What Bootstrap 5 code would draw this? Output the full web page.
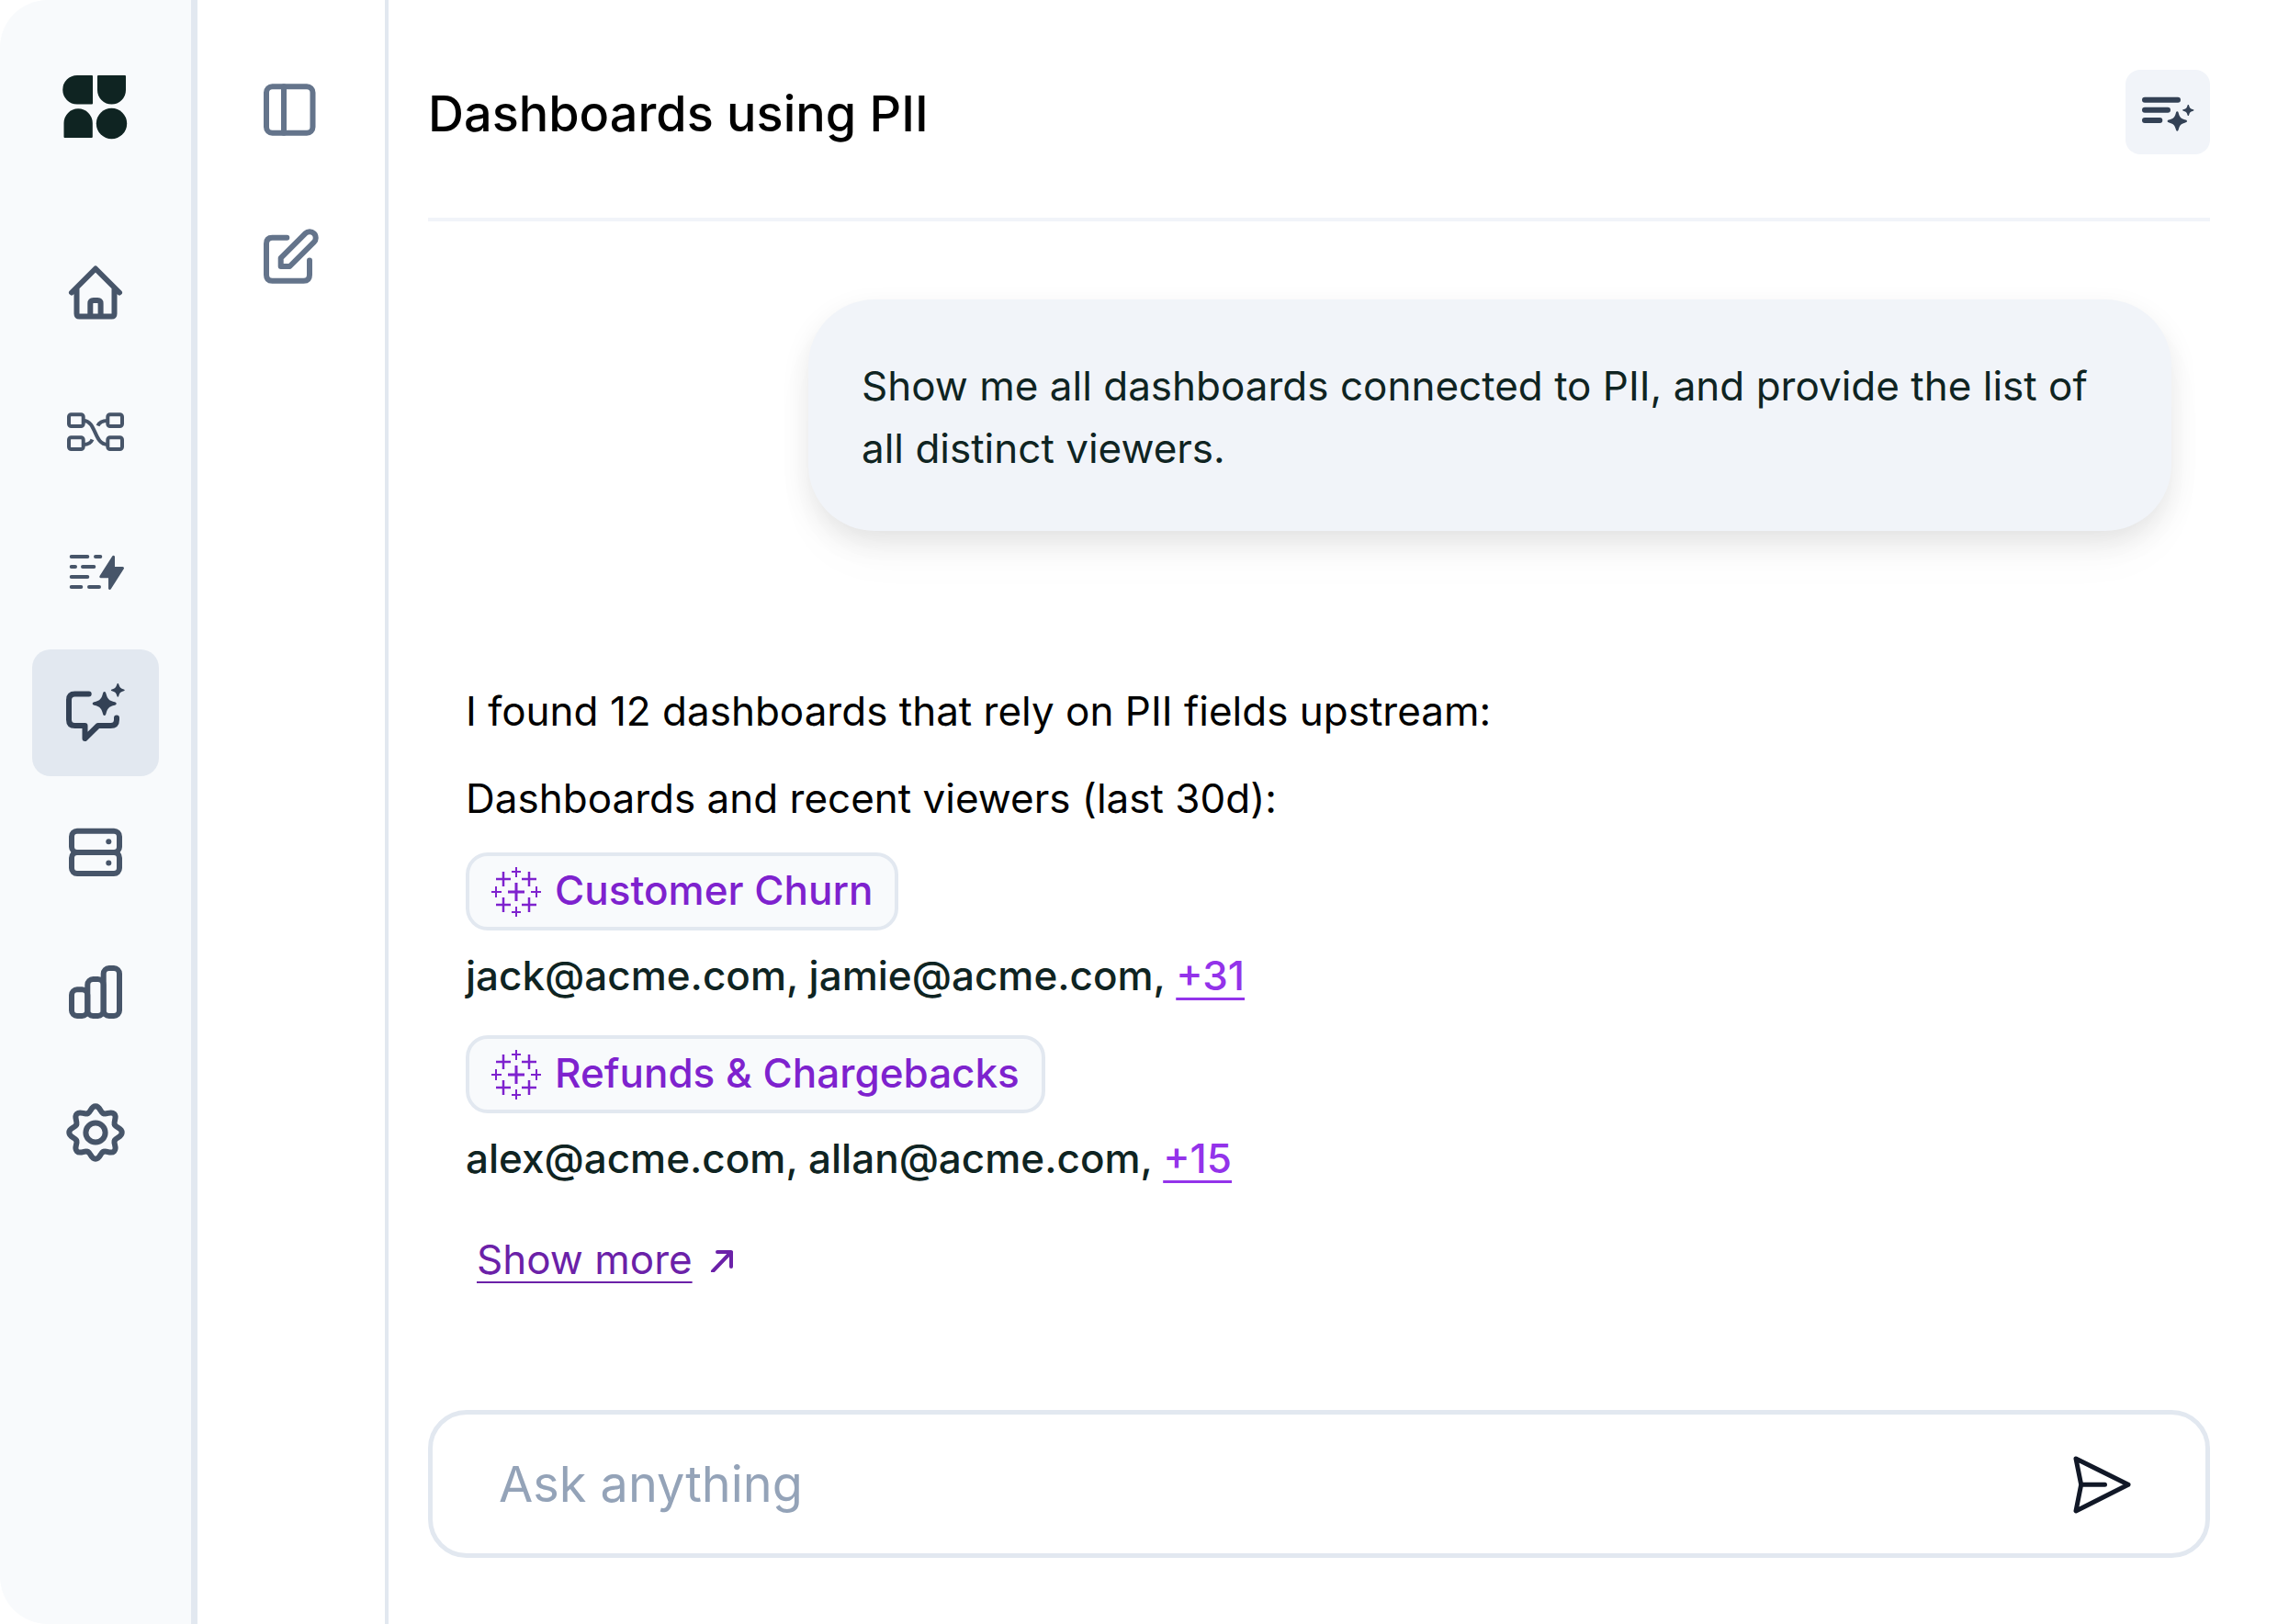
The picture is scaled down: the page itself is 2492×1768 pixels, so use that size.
<!DOCTYPE html>
<html lang="en">
<head>
<meta charset="utf-8">
<meta name="viewport" content="width=device-width, initial-scale=1">
<title>Dashboards using PII</title>
<link href="https://cdn.jsdelivr.net/npm/bootstrap@5.3.0/dist/css/bootstrap.min.css" rel="stylesheet">
<style>
  :root {
    --line: #e2e8f0;
    --soft: #f1f4f9;
    --ink: #0f2422;
    --slate: #475569;
  }
  body { font-family: Inter, "Liberation Sans", sans-serif; font-size: 44px; line-height: 68px; color: #000; background: #fff; }
  svg { display: block; flex: none; fill: none; stroke: currentColor; stroke-width: 6; stroke-linecap: round; stroke-linejoin: round; }
  svg .solid { fill: currentColor; stroke: none; }

  .rail { width: 215px; background: #f8fafc; border-right: 7px solid var(--line); border-radius: 52px 0 0 52px; padding-top: 80px; gap: 99px; }
  .rail-nav { gap: 14px; }
  .rail-link { width: 138px; height: 138px; border-radius: 20px; color: var(--slate); }
  .rail-link.active { background: var(--line); color: #334155; }
  .brand-mark { color: #0f2422; }

  .tools { width: 208px; border-right: 4px solid var(--line); padding-top: 83px; gap: 89px; }
  .tool-btn { color: #64748b; }

  .chat { padding: 0 86px 72px 43px; }
  .chat-head { padding: 76px 0 69px; border-bottom: 4px solid var(--soft); }
  .chat-title { font-size: 54px; line-height: 68px; font-weight: 500; }
  .head-btn { width: 92px; height: 92px; border-radius: 16px; background: var(--soft); color: #334155; }

  .thread { padding: 85px 42px 0 41px; gap: 162px; }
  .question { max-width: 1484px; padding: 60px 57px 56px 58px; border-radius: 72px; background: var(--soft); color: var(--ink); box-shadow: 0 12px 32px -2px rgba(0, 0, 0, .10), 0 32px 60px -8px rgba(0, 0, 0, .03); }
  .intro { gap: 27px; margin-bottom: 25px; }
  .source { gap: 15px; margin-bottom: 31px; }
  .chip { height: 85px; padding: 0 24px 0 23px; gap: 14px; border: 4px solid var(--line); border-radius: 24px; background: #f8fafc; color: #7e22ce; font-weight: 500; }
  .chip span { padding-bottom: 4px; }
  .chip svg { stroke-width: 2; stroke-linecap: butt; }
  .viewers { font-weight: 500; color: var(--ink); }
  .viewers a { color: #9333ea; text-decoration-thickness: 3px; text-underline-offset: 8px; }
  .more { margin: 11px 0 0 12px; gap: 18px; color: #6b21a8; text-decoration-thickness: 2px; text-underline-offset: 8px; }
  .more svg { stroke-width: 4; }

  .composer { height: 161px; padding: 0 77px 0 72px; border: 5px solid var(--line); border-radius: 42px; }
  .ask { font-size: 54px; font-weight: 400; line-height: 68px; color: var(--ink); outline: 0; min-width: 0; }
  .ask::placeholder { color: #94a3b8; opacity: 1; }
  .send-btn { color: #111827; }
  .send-btn svg { stroke-width: 5; }
</style>
</head>
<body>
<svg width="0" height="0" class="position-absolute" aria-hidden="true">
  <defs>
    <path id="lobe" d="M-8.6-20.8C-4.8-22.4-5.2-28.7 0-28.7C5.2-28.7 4.8-22.4 8.6-20.8"/>
    <path id="spark" class="solid" d="M0-13C1.2-13 1.5-12 2-10C3.5-5 5-3.5 10-2C12-1.5 13-1.2 13 0C13 1.2 12 1.5 10 2C5 3.5 3.5 5 2 10C1.500 12 1.200 13 0 13C-1.200 13-1.500 12-2 10C-3.500 5-5 3.500-10 2C-12 1.500-13 1.200-13 0C-13-1.200-12-1.500-10-2C-5-3.500-3.500-5-2-10C-1.500-12-1.200-13 0-13Z"/>
    <g id="plusgrid">
      <path stroke-width="3" d="M-9 0H9M0-10V10"/>
      <path stroke-width="2.500" d="M-22-14H-6M-14-22V-6M6-14H22M14-22V-6M-22 14H-6M-14 6V22M6 14H22M14 6V22"/>
      <path stroke-width="2" d="M-5-22H5M0-27V-16M-5 22H5M0 16V27M-27 0H-16M-22-6V6M16 0H27M22-6V6"/>
    </g>
  </defs>
</svg>

<div class="d-flex min-vh-100">
  <aside class="rail d-flex flex-column align-items-center flex-shrink-0">
    <a href="#" class="brand-mark" aria-label="Home page">
      <svg width="72" height="72" viewBox="0 0 72 72">
        <path class="solid" d="M16 2H32q1 0 1 1V32.500q0 1-1 1H16A15.700 15.700 0 0 1 16 2ZM39 2H68q1 0 1 1V18A15.500 15.500 0 0 1 38 18V3q0-1 1-1ZM1.500 54A15.500 15.500 0 0 1 32.800 54V69q0 1-1 1H2.500q-1 0-1-1Z"/>
        <circle class="solid" cx="53.500" cy="54.500" r="16.700"/>
      </svg>
    </a>
    <nav class="rail-nav d-flex flex-column" aria-label="Main">
      <a href="#" class="rail-link d-flex align-items-center justify-content-center" aria-label="Home">
        <svg width="72" height="72" viewBox="0 0 72 72"><path d="M10 34.500L36 8.500L62 34.500M15.500 30V57.500q0 3 3 3H53.500q3 0 3-3V30M30.300 60V46.500q0-3.500 3.500-3.500h4.500q3.300 0 3.300 3.500V60"/></svg>
      </a>
      <a href="#" class="rail-link d-flex align-items-center justify-content-center" aria-label="Lineage">
        <svg width="72" height="72" viewBox="0 0 72 72"><g stroke-width="4"><rect x="7" y="15.300" width="15.700" height="12.700" rx="2.500"/><rect x="49.300" y="15.300" width="15.700" height="12.700" rx="2.500"/><rect x="7" y="40.300" width="15.700" height="12.700" rx="2.500"/><rect x="49.300" y="40.300" width="15.700" height="12.700" rx="2.500"/><path d="M23 22C37 22 34 48 49 48"/><path stroke-linecap="butt" d="M49 22C44 22 40 24 38.500 27.500M23 48C28 48 31 46 32.500 42.500"/></g></svg>
      </a>
      <a href="#" class="rail-link d-flex align-items-center justify-content-center" aria-label="Queries">
        <svg width="72" height="72" viewBox="0 0 72 72"><path stroke-width="4" d="M9.700 18H27.300M36 18H41.300M9.700 29H14M22 29H34.300M9.700 40H27.300M9.700 51H20.300M29 51H40"/><path fill="currentColor" stroke-width="3" d="M55.500 18.300V30.500H65.500L51.500 52.500V39.700H41.800Z"/></svg>
      </a>
      <a href="#" class="rail-link active d-flex align-items-center justify-content-center" aria-label="AI chat" aria-current="page">
        <svg width="72" height="72" viewBox="0 0 72 72"><path d="M28.700 15.500H13.500Q7 15.500 7 22V43.500Q7 50 13.500 50H24.500V64L38.700 50H52.500Q59 50 59 43.500V41.500"/><use href="#spark" x="45.700" y="26"/><use href="#spark" transform="translate(60.300 11.300) scale(.57)"/></svg>
      </a>
      <a href="#" class="rail-link d-flex align-items-center justify-content-center" aria-label="Sources">
        <svg width="72" height="72" viewBox="0 0 72 72"><rect x="10" y="12.700" width="52" height="23.200" rx="6"/><rect x="10" y="35.900" width="52" height="23.200" rx="6"/><circle class="solid" cx="50.300" cy="24.300" r="3"/><circle class="solid" cx="50.300" cy="47.500" r="3"/></svg>
      </a>
      <a href="#" class="rail-link d-flex align-items-center justify-content-center" aria-label="Reports">
        <svg width="72" height="72" viewBox="0 0 72 72"><rect x="10" y="33.300" width="17.300" height="28.700" rx="6"/><rect x="27.300" y="22" width="17.300" height="40" rx="6"/><rect x="44.700" y="10" width="17.300" height="52" rx="6"/></svg>
      </a>
      <a href="#" class="rail-link d-flex align-items-center justify-content-center" aria-label="Settings">
        <svg width="72" height="72" viewBox="-36 -37 72 72"><use href="#lobe"/><use href="#lobe" transform="rotate(45)"/><use href="#lobe" transform="rotate(90)"/><use href="#lobe" transform="rotate(135)"/><use href="#lobe" transform="rotate(180)"/><use href="#lobe" transform="rotate(225)"/><use href="#lobe" transform="rotate(270)"/><use href="#lobe" transform="rotate(315)"/><circle r="10.600"/></svg>
      </a>
    </nav>
  </aside>

  <div class="tools d-flex flex-column align-items-center flex-shrink-0">
    <button type="button" class="tool-btn btn p-0 border-0" aria-label="Toggle panel">
      <svg width="72" height="72" viewBox="0 0 72 72"><rect x="9" y="11.300" width="50.500" height="50.500" rx="6.500"/><path d="M28 11.300V61.800"/></svg>
    </button>
    <button type="button" class="tool-btn btn p-0 border-0" aria-label="New chat">
      <svg width="72" height="72" viewBox="0 0 72 72"><path d="M31.300 14.700H15.500Q9 14.700 9 21.200V55.200Q9 61.700 15.500 61.700H49.500Q56 61.700 56 55.200V39.500"/><path d="M24.700 46V36.900L51.400 10.200a6.600 6.600 0 0 1 9.400 9.400L34.400 46Z"/></svg>
    </button>
  </div>

  <main class="chat flex-grow-1 d-flex flex-column">
    <header class="chat-head d-flex align-items-center justify-content-between">
      <h1 class="chat-title m-0 pt-1">Dashboards using PII</h1>
      <button type="button" class="head-btn btn p-0 border-0 d-flex align-items-center justify-content-center" aria-label="Summarize">
        <svg width="72" height="72" viewBox="0 0 72 72"><path d="M11 22.700H47M11 33.700H36M11 45H27.300"/><use href="#spark" transform="translate(46.300 46) scale(.82)"/><use href="#spark" transform="translate(58.300 34) scale(.47)"/></svg>
      </button>
    </header>

    <section class="thread d-flex flex-column">
      <p class="question align-self-end m-0">Show me all dashboards connected to PII, and provide the list of all distinct viewers.</p>

      <div class="answer d-flex flex-column align-items-start">
        <div class="intro d-flex flex-column">
          <p class="m-0">I found 12 dashboards that rely on PII fields upstream:</p>
          <p class="m-0">Dashboards and recent viewers (last 30d):</p>
        </div>
        <div class="source d-flex flex-column align-items-start">
          <a href="#" class="chip d-flex align-items-center text-decoration-none">
            <svg width="56" height="56" viewBox="-28 -28 56 56"><use href="#plusgrid"/></svg>
            <span>Customer Churn</span>
          </a>
          <p class="viewers m-0">jack@acme.com, jamie@acme.com, <a href="#">+31</a></p>
        </div>
        <div class="source d-flex flex-column align-items-start">
          <a href="#" class="chip d-flex align-items-center text-decoration-none">
            <svg width="56" height="56" viewBox="-28 -28 56 56"><use href="#plusgrid"/></svg>
            <span>Refunds &amp; Chargebacks</span>
          </a>
          <p class="viewers m-0">alex@acme.com, allan@acme.com, <a href="#">+15</a></p>
        </div>
        <a href="#" class="more d-flex align-items-center">Show more
          <svg width="28" height="28" viewBox="0 -3 28 28"><path d="M4 24L24 3M9 3H24V19"/></svg></a>
      </div>
    </section>

    <form class="composer d-flex align-items-center mt-auto">
      <input class="ask flex-grow-1 border-0 bg-transparent p-0" type="text" placeholder="Ask anything" aria-label="Ask anything">
      <button type="submit" class="send-btn btn p-0 border-0" aria-label="Send">
        <svg width="72" height="72" viewBox="0 0 72 72"><path d="M8 8L65 36.300L8 65L13.700 36.300ZM13.700 36.300H39.500"/></svg>
      </button>
    </form>
  </main>
</div>
<script src="https://cdn.jsdelivr.net/npm/bootstrap@5.3.0/dist/js/bootstrap.bundle.min.js"></script>
</body>
</html>
